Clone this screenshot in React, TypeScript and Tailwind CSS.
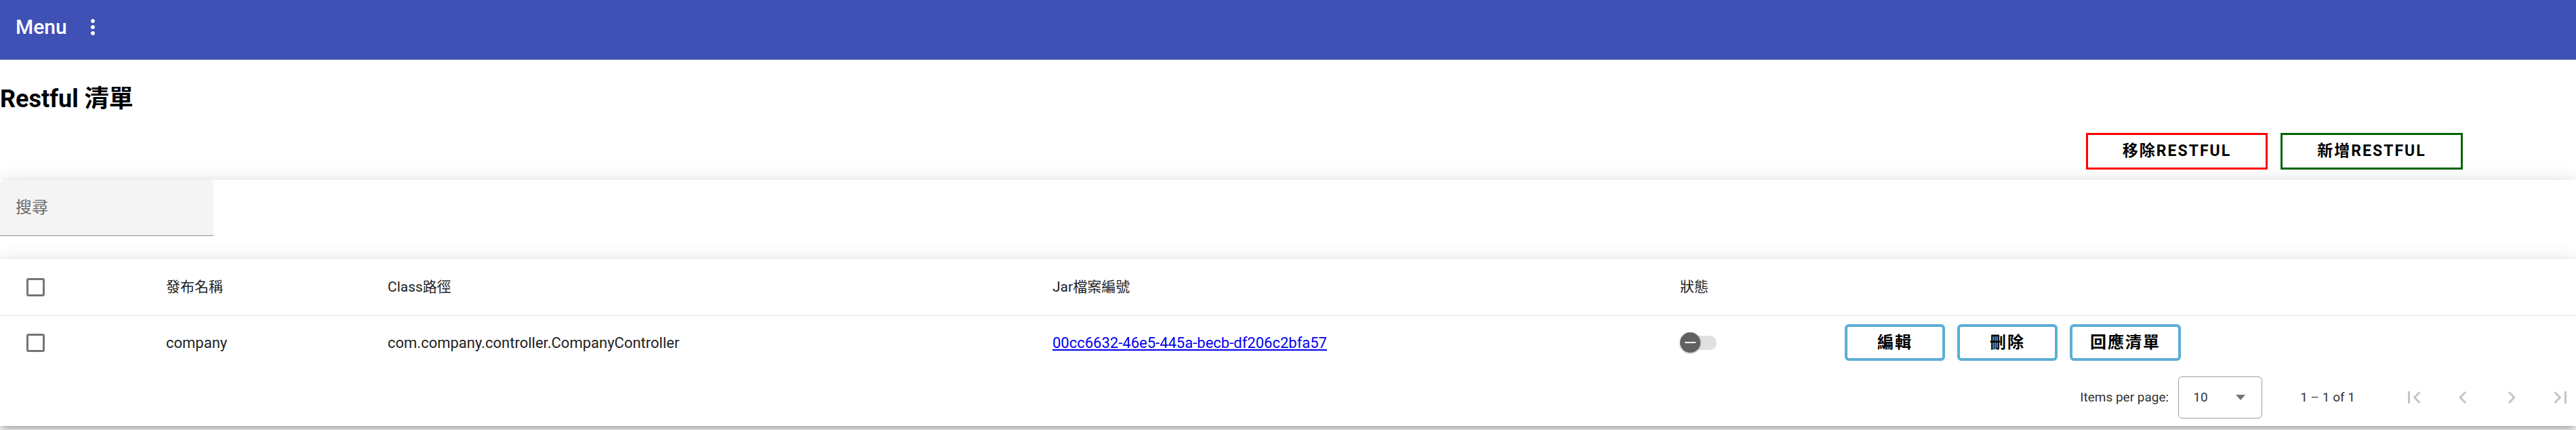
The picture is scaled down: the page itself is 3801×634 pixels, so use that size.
import { type ReactNode } from 'react'

const rows = [
  {
    name: 'company',
    classPath: 'com.company.controller.CompanyController',
    jarId: '00cc6632-46e5-445a-becb-df206c2bfa57',
  },
]

const cardShadow =
  'shadow-[0_4px_8px_-2px_rgba(0,0,0,0.2),0_9px_15px_0_rgba(0,0,0,0.14),0_2px_27px_0_rgba(0,0,0,0.12)]'

function Checkbox() {
  return <span className="block h-[27px] w-[27px] rounded-[3px] border-[3px] border-[#757575]" />
}

function RowButton({ children }: { children: ReactNode }) {
  return (
    <button
      type="button"
      className="h-[54px] min-w-[148px] rounded-[6px] border-[4px] border-[#5baed4] bg-white px-[26px] text-[24px] font-bold tracking-[2px] text-black"
    >
      {children}
    </button>
  )
}

function NavIcon({ d }: { d: string }) {
  return (
    <button type="button" disabled className="flex h-[72px] w-[72px] items-center justify-center">
      <svg viewBox="0 0 24 24" className="h-[36px] w-[36px] fill-[#c4c4c4]">
        <path d={d} />
      </svg>
    </button>
  )
}

/** Restful 清單頁面 */
export default function App() {
  return (
    <div className="min-h-[634px] w-full overflow-hidden bg-white font-['Roboto','Noto_Sans_CJK_TC',sans-serif] text-black">
      {/* toolbar */}
      <header className="flex h-[88px] items-center bg-[#3f51b5] pb-[9px] pl-[23px] text-white">
        <span className="text-[30px] leading-none font-medium">Menu</span>
        <svg viewBox="0 0 24 24" className="ml-[20px] h-[36px] w-[36px] fill-white">
          <path d="M12 8c1.1 0 2-.9 2-2s-.9-2-2-2-2 .9-2 2 .9 2 2 2zm0 2c-1.1 0-2 .9-2 2s.9 2 2 2 2-.9 2-2-.9-2-2-2zm0 6c-1.1 0-2 .9-2 2s.9 2 2 2 2-.9 2-2-.9-2-2-2z" />
        </svg>
      </header>

      <h2 className="mt-[36px] text-[36px] leading-[44px] font-bold">Restful 清單</h2>

      <div className="mt-[28px] flex justify-end gap-[19px] pr-[167px]">
        <button
          type="button"
          className="h-[54px] w-[268px] border-[3px] border-[#ff0000] bg-white text-[23px] font-bold tracking-[2px]"
        >
          移除RESTFUL
        </button>
        <button
          type="button"
          className="h-[54px] w-[269px] border-[3px] border-[#006400] bg-white text-[23px] font-bold tracking-[2px]"
        >
          新增RESTFUL
        </button>
      </div>

      {/* 搜尋 */}
      <section className={`relative mt-[15px] h-[117px] bg-white ${cardShadow}`}>
        <div className="flex h-[83px] w-[315px] items-center rounded-t-[6px] border-b border-[#8e8e8e] bg-[#f4f4f4] pl-[23px]">
          <input
            placeholder="搜尋"
            className="w-full bg-transparent text-[24px] text-[#222] outline-none placeholder:text-[#6b6b6b]"
          />
        </div>
      </section>

      {/* 清單 */}
      <section className={`relative bg-white ${cardShadow}`}>
        <div className="grid h-[84px] grid-cols-[245px_327px_981px_926px_243px_1fr] items-center border-b border-[#e0e0e0] text-[21px] text-[#222]">
          <div className="pl-[39px]">
            <Checkbox />
          </div>
          <div>發布名稱</div>
          <div>Class路徑</div>
          <div>Jar檔案編號</div>
          <div>狀態</div>
          <div />
        </div>

        {rows.map((r) => (
          <div
            key={r.jarId}
            className="grid h-[78px] grid-cols-[245px_327px_981px_926px_243px_1fr] items-center text-[22px] text-[#222]"
          >
            <div className="pl-[39px]">
              <Checkbox />
            </div>
            <div>{r.name}</div>
            <div>{r.classPath}</div>
            <div>
              <a href="#" className="text-[#0000ee] underline">
                {r.jarId}
              </a>
            </div>
            <div>
              <span className="relative flex h-[30px] w-[54px] items-center">
                <span className="h-[21px] w-full rounded-full bg-[#e0e0e0]" />
                <span className="absolute top-0 left-0 flex h-[30px] w-[30px] items-center justify-center rounded-full bg-[#616161] shadow-[0_1px_3px_rgba(0,0,0,0.35)]">
                  <span className="h-[2px] w-[16px] bg-white" />
                </span>
              </span>
            </div>
            <div className="flex gap-[18px]">
              <RowButton>編輯</RowButton>
              <RowButton>刪除</RowButton>
              <RowButton>回應清單</RowButton>
            </div>
          </div>
        ))}

        {/* paginator */}
        <div className="flex h-[84px] items-center justify-end text-[19px] text-[#333]">
          <span>Items per page:</span>
          <div className="ml-[14px] flex h-[62px] w-[124px] items-center justify-between rounded-[6px] border border-[#a0a0a0] pr-[24px] pl-[21px]">
            <span>10</span>
            <span className="h-0 w-0 border-x-[7.5px] border-t-[8px] border-x-transparent border-t-[#757575]" />
          </div>
          <span className="ml-[56px]">1 – 1 of 1</span>
          <div className="mr-[-13px] ml-[51px] flex">
            <NavIcon d="M18.41 16.59L13.82 12l4.59-4.59L17 6l-6 6 6 6zM6 6h2v12H6z" />
            <NavIcon d="M15.41 7.41L14 6l-6 6 6 6 1.41-1.41L10.83 12z" />
            <NavIcon d="M10 6L8.59 7.41 13.17 12l-4.58 4.59L10 18l6-6z" />
            <NavIcon d="M5.59 7.41L10.18 12l-4.59 4.59L7 18l6-6-6-6zM16 6h2v12h-2z" />
          </div>
        </div>
      </section>
    </div>
  )
}
